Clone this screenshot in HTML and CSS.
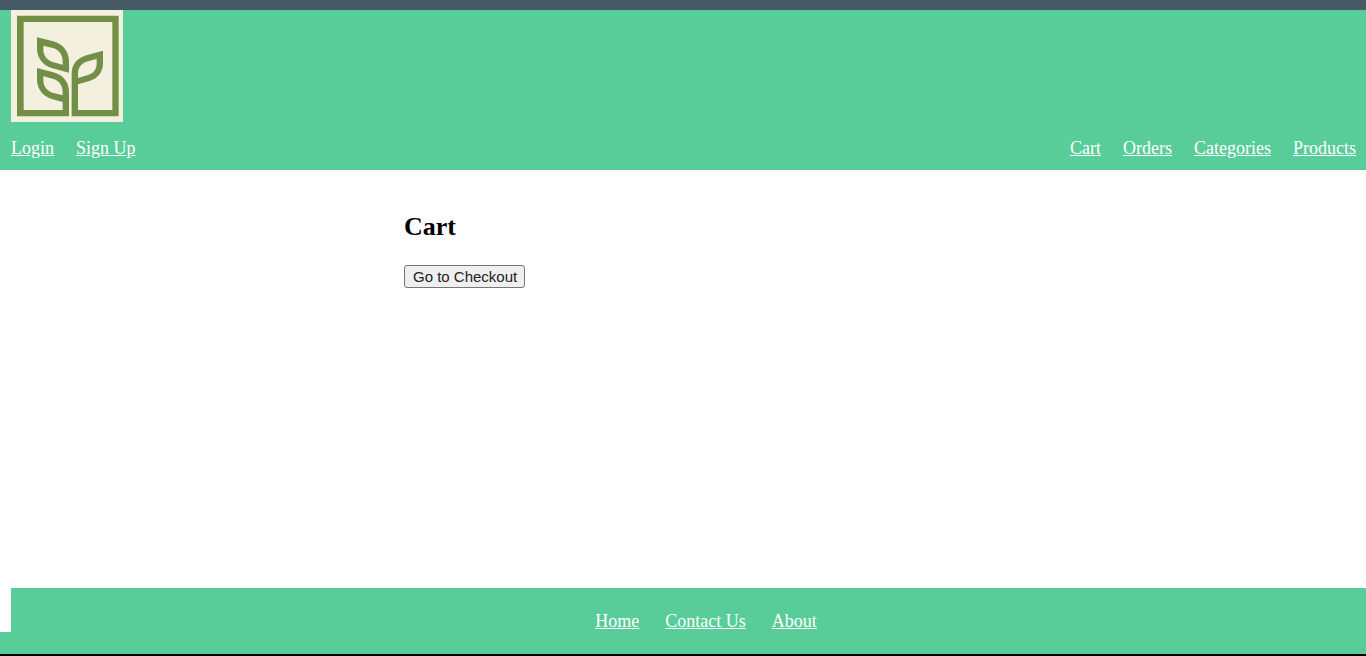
FILE: index.html
```html
<!DOCTYPE html>
<html lang="en">
<head>
<meta charset="utf-8">
<title>Cart</title>
<link rel="stylesheet" href="styles.css">
</head>
<body>
<header class="header">
  <svg class="logo" viewBox="33 30 336 336" role="img" aria-label="Plant logo">
    <rect class="logo-paper" x="33" y="30" width="336" height="336"/>
    <g class="logo-ink">
      <path d="M111 112L160 124C190 132 207 155 207 184V218L155 204C128 196 111 172 111 146ZM130 137V148C130 168 141 181 160 187L188 194V184C188 164 178 150 158 144Z"/>
      <path d="M111 204L160 217C190 225 207 247 207 275V349H51V47H356V349H215V220C215 193 232 173 262 165L309 152V190C309 216 294 236 268 243L234 253V330H337V66H71V330H188V306L158 298C128 290 111 266 111 238ZM130 229V240C130 260 141 273 160 279L188 286V276C188 256 178 242 158 236ZM290 177L264 184C245 189 234 202 234 222V234L262 226C280 221 290 209 290 190Z"/>
    </g>
  </svg>
  <div class="header-nav">
    <nav class="links" aria-label="Account"><a href="#">Login</a><a href="#">Sign Up</a></nav>
    <nav class="links" aria-label="Shop"><a href="#">Cart</a><a href="#">Orders</a><a href="#">Categories</a><a href="#">Products</a></nav>
  </div>
</header>
<main class="cart">
  <h2 class="cart-title">Cart</h2>
  <button class="checkout" type="button">Go to Checkout</button>
</main>
<footer class="footer">
  <nav class="footer-nav" aria-label="Footer"><a href="#">Home</a><a href="#">Contact Us</a><a href="#">About</a></nav>
  <div class="footer-base"></div>
</footer>
</body>
</html>
```

FILE: styles.css
```css
* { box-sizing: border-box; }
body {
  margin: 0;
  min-height: 100vh;
  display: flex;
  flex-direction: column;
  background: #fff;
  font: 18px/22px "Liberation Serif", "Times New Roman", serif;
}
a { color: #fff; }
.header {
  padding: 0 10px 11px 11px;
  border-top: 10px solid #455a64;
  background: #58cd99;
}
.logo { display: block; width: 112px; height: 112px; }
.logo-paper { fill: #f4f0df; }
.logo-ink { fill: #728f45; fill-rule: evenodd; }
.header-nav { display: flex; justify-content: space-between; padding-top: 15px; }
.links { display: flex; gap: 22px; }
.cart {
  flex: 1;
  width: 100%;
  max-width: 558px;
  margin: 0 auto;
  padding: 42px 0 22px;
}
.cart-title { margin: 0 0 23px; font-size: 26px; line-height: 30px; }
.checkout {
  display: block;
  height: 23px;
  padding: 0 7px 0 8px;
  border: 1px solid #767676;
  border-radius: 3px;
  background: #efefef;
  color: #222;
  font: 15px/21px "Liberation Sans", Arial, sans-serif;
}
.footer { border-bottom: 2px solid #000; }
.footer-nav {
  display: flex;
  justify-content: center;
  gap: 26px;
  margin-left: 11px;
  padding: 22px 0 0 35px;
  background: #58cd99;
}
.footer-base { height: 22px; background: #58cd99; }
```
